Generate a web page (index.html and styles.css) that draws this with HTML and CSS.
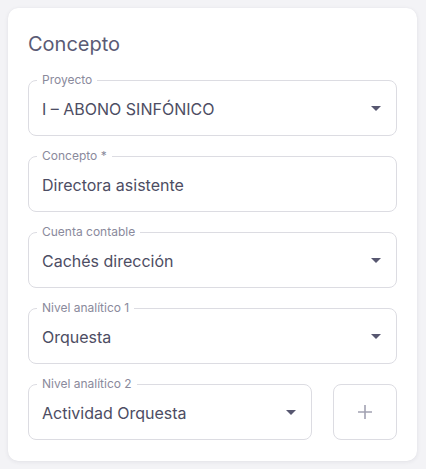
FILE: index.html
```html
<!DOCTYPE html>
<html lang="es">
<head>
<meta charset="utf-8">
<link rel="stylesheet" href="styles.css">
</head>
<body>
<div class="card">
  <h2 class="title">Concepto</h2>
  <div class="fields">
    <div class="field">
      <fieldset class="outline"><legend><span>Proyecto</span></legend></fieldset>
      <label class="label">Proyecto</label>
      <div class="value">I – ABONO SINFÓNICO</div>
      <svg class="arrow" viewBox="0 0 10 5"><path d="M0 0h10L5 5z"/></svg>
    </div>
    <div class="field">
      <fieldset class="outline"><legend><span>Concepto *</span></legend></fieldset>
      <label class="label">Concepto *</label>
      <div class="value">Directora asistente</div>
    </div>
    <div class="field">
      <fieldset class="outline"><legend><span>Cuenta contable</span></legend></fieldset>
      <label class="label">Cuenta contable</label>
      <div class="value">Cachés dirección</div>
      <svg class="arrow" viewBox="0 0 10 5"><path d="M0 0h10L5 5z"/></svg>
    </div>
    <div class="field">
      <fieldset class="outline"><legend><span>Nivel analítico 1</span></legend></fieldset>
      <label class="label">Nivel analítico 1</label>
      <div class="value">Orquesta</div>
      <svg class="arrow" viewBox="0 0 10 5"><path d="M0 0h10L5 5z"/></svg>
    </div>
    <div class="row">
      <div class="field grow">
        <fieldset class="outline"><legend><span>Nivel analítico 2</span></legend></fieldset>
        <label class="label">Nivel analítico 2</label>
        <div class="value">Actividad Orquesta</div>
        <svg class="arrow" viewBox="0 0 10 5"><path d="M0 0h10L5 5z"/></svg>
      </div>
      <button class="add" type="button">
        <svg viewBox="0 0 16 16"><path d="M8 1v14M1 8h14"/></svg>
      </button>
    </div>
  </div>
</div>
</body>
</html>
```

FILE: styles.css
```css
html, body {
  margin: 0;
  padding: 0;
}
body {
  background: #f3f3f6;
  font-family: Inter, "Noto Sans", sans-serif;
  padding: 8px;
}
.card {
  width: 409px;
  box-sizing: border-box;
  background: #ffffff;
  border-radius: 10px;
  box-shadow: 0 1px 4px rgba(40, 40, 70, 0.08), 0 0 1px rgba(40, 40, 70, 0.06);
  padding: 20px 20px 21px 20px;
}
.title {
  margin: 0 0 20px 0;
  font-size: 20px;
  line-height: 32px;
  font-weight: 400;
  color: #5b5b75;
}
.fields {
  display: flex;
  flex-direction: column;
  gap: 20px;
}
.row {
  display: flex;
  gap: 21px;
}
.field {
  position: relative;
  height: 56px;
  display: flex;
  align-items: center;
  padding: 0 14px;
  box-sizing: border-box;
}
.grow {
  flex: 1;
}
.outline {
  position: absolute;
  inset: -5px 0 0 0;
  margin: 0;
  padding: 0 8px;
  border: 1px solid #dcdce2;
  border-radius: 8px;
  pointer-events: none;
}
.outline legend {
  padding: 0;
  font-size: 12px;
  line-height: 11px;
  height: 11px;
  visibility: hidden;
}
.outline legend span {
  padding: 0 5px;
  display: inline-block;
}
.label {
  position: absolute;
  left: 14px;
  top: -7px;
  font-size: 12px;
  line-height: 14px;
  color: #8a8a9c;
}
.value {
  font-size: 16px;
  line-height: 20px;
  color: #4d4d63;
  margin-top: 1px;
}
.arrow {
  position: absolute;
  right: 16px;
  top: 26px;
  width: 10px;
  height: 5px;
  fill: #575770;
}
.add {
  width: 64px;
  height: 56px;
  flex: none;
  margin: 0;
  padding: 0;
  background: #ffffff;
  border: 1px solid #dcdce2;
  border-radius: 8px;
  display: flex;
  align-items: center;
  justify-content: center;
}
.add svg {
  width: 16px;
  height: 16px;
  stroke: #a2a2b2;
  stroke-width: 1.6;
  fill: none;
}
```
